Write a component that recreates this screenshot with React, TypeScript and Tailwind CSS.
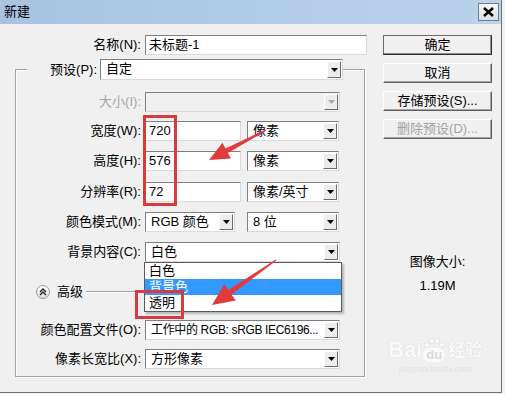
import React from "react";

const FONT = "font-[family-name:'Liberation_Sans','Noto_Sans_CJK_SC',sans-serif]";

function DropArrow({ disabled = false }: { disabled?: boolean }) {
  return (
    <span className="my-[1px] mr-[1px] flex w-[14px] shrink-0 items-center justify-center border border-t-white border-l-white border-r-[#6d6d6d] border-b-[#6d6d6d] bg-[#ececec]">
      <svg width="7" height="4" viewBox="0 0 7 4">
        <path d="M0 0h7L3.5 4z" fill={disabled ? "#a8a8a8" : "#000"} />
      </svg>
    </span>
  );
}

function Select({
  w,
  h = "h-[20px]",
  children,
  disabled = false,
  tight = false,
}: {
  w: string;
  h?: string;
  children?: React.ReactNode;
  disabled?: boolean;
  tight?: boolean;
}) {
  return (
    <div
      className={`${w} ${h} flex shrink-0 border border-t-[#7f7f7f] border-l-[#7f7f7f] border-r-[#dadada] border-b-[#dadada] ${
        disabled ? "bg-[#f0f0f0]" : "bg-white"
      }`}
    >
      <span
        className={`flex-1 overflow-hidden whitespace-nowrap pl-[5px] leading-[18px] ${
          tight ? "text-[12px] tracking-[-0.35px]" : ""
        }`}
      >
        {children}
      </span>
      <DropArrow disabled={disabled} />
    </div>
  );
}

function Input({ w, children }: { w: string; children?: React.ReactNode }) {
  return (
    <div
      className={`${w} h-[20px] shrink-0 border border-t-[#7f7f7f] border-l-[#7f7f7f] border-r-[#dadada] border-b-[#dadada] bg-white pl-[3px] leading-[18px]`}
    >
      {children}
    </div>
  );
}

function Button({
  children,
  primary = false,
  disabled = false,
}: {
  children: React.ReactNode;
  primary?: boolean;
  disabled?: boolean;
}) {
  return (
    <div
      className={`flex h-[20px] w-[109px] items-center justify-center border ${
        primary
          ? "border-[#6a6a6a] border-r-[#303030] border-b-[#303030] shadow-[inset_-1px_-1px_0_#8a8a8a]"
          : "border-t-white border-l-white border-r-[#5e5e5e] border-b-[#5e5e5e] shadow-[inset_-1px_-1px_0_#a5a5a5]"
      } ${disabled ? "text-[#a3a3a3]" : "text-black"}`}
    >
      {children}
    </div>
  );
}

function Row({
  label,
  mt,
  children,
  dim = false,
}: {
  label: string;
  mt: string;
  children: React.ReactNode;
  dim?: boolean;
}) {
  return (
    <div className={`${mt} flex h-[20px] items-center`}>
      <span className={`w-[125px] text-right ${dim ? "text-[#a6a6a6]" : ""}`}>{label}</span>
      <div className="ml-[4px] flex items-center">{children}</div>
    </div>
  );
}

function arrowPoints(tx: number, ty: number, px: number, py: number, head: number, hw: number, sw: number) {
  const dx = px - tx;
  const dy = py - ty;
  const L = Math.hypot(dx, dy);
  const ux = dx / L;
  const uy = dy / L;
  const nx = -uy;
  const ny = ux;
  const bx = px - ux * head;
  const by = py - uy * head;
  const pts = [
    [tx + nx * 0.6, ty + ny * 0.6],
    [bx + nx * sw, by + ny * sw],
    [bx + nx * hw, by + ny * hw],
    [px, py],
    [bx - nx * hw, by - ny * hw],
    [bx - nx * sw, by - ny * sw],
    [tx - nx * 0.6, ty - ny * 0.6],
  ];
  return pts.map((p) => p.map((v) => v.toFixed(1)).join(",")).join(" ");
}

export default function App() {
  return (
    <div className={`relative h-[394px] w-[505px] overflow-hidden bg-[#f0f0f0] text-[13px] text-black ${FONT}`}>
      <div className="flex h-[393px] w-[502px] flex-col border-r border-b border-[#6f6f6f]">
        {/* Title bar */}
        <div className="flex h-[24px] shrink-0 items-center justify-between bg-gradient-to-r from-[#a8c3e2] to-[#bbd2ec] pl-[4px] pr-[2px]">
          <span className="leading-[16px]">新建</span>
          <div className="flex h-[18px] w-[21px] items-center justify-center border border-[#6e7f93] bg-gradient-to-b from-[#f4f6f9] to-[#d8dee6]">
            <svg width="11" height="10" viewBox="0 0 11 10">
              <path d="M1 1l9 8M10 1L1 9" stroke="#000" strokeWidth="2.4" />
            </svg>
          </div>
        </div>

        <div className="flex flex-1">
          {/* Left side */}
          <div className="w-[383px]">
            <div className="mt-[11px] flex h-[20px] items-center">
              <span className="w-[141px] text-right">名称(N):</span>
              <div className="ml-[4px]">
                <Input w="w-[222px]">未标题-1</Input>
              </div>
            </div>

            <fieldset className="mt-[4px] ml-[15px] w-[350px] border border-[#a3a3a3] pb-[7px] shadow-[inset_1px_1px_0_#ffffff,1px_1px_0_#ffffff]">
              <legend className="ml-[11px] bg-[#f0f0f0]">
                <div className="flex h-[21px] items-center">
                  <span className="w-[70px] text-right">预设(P):</span>
                  <div className="ml-[3px]">
                    <Select w="w-[243px]" h="h-[21px]">自定</Select>
                  </div>
                </div>
              </legend>

              <Row label="大小(I):" mt="mt-[12px]" dim>
                <Select w="w-[195px]" disabled />
              </Row>
              <Row label="宽度(W):" mt="mt-[9px]">
                <Input w="w-[96px]">720</Input>
                <div className="ml-[6px]">
                  <Select w="w-[92px]">像素</Select>
                </div>
              </Row>
              <Row label="高度(H):" mt="mt-[10px]">
                <Input w="w-[96px]">576</Input>
                <div className="ml-[6px]">
                  <Select w="w-[92px]">像素</Select>
                </div>
              </Row>
              <Row label="分辨率(R):" mt="mt-[11px]">
                <Input w="w-[96px]">72</Input>
                <div className="ml-[6px]">
                  <Select w="w-[92px]">像素/英寸</Select>
                </div>
              </Row>
              <Row label="颜色模式(M):" mt="mt-[10px]">
                <Select w="w-[90px]">RGB 颜色</Select>
                <div className="ml-[12px]">
                  <Select w="w-[92px]">8 位</Select>
                </div>
              </Row>
              <Row label="背景内容(C):" mt="mt-[10px]">
                <div className="relative">
                  <Select w="w-[195px]">白色</Select>
                  {/* open list */}
                  <div className="absolute left-[-1px] top-[20px] z-10 w-[198px] border border-[#5a5a5a] bg-white shadow-[2px_2px_2px_rgba(0,0,0,0.25)]">
                    <div className="h-[16px] pl-[4px] leading-[16px]">白色</div>
                    <div className="h-[16px] bg-[#3399ff] pl-[4px] leading-[16px] text-white">背景色</div>
                    <div className="h-[16px] pl-[4px] leading-[16px]">透明</div>
                  </div>
                </div>
              </Row>

              {/* Advanced */}
              <div className="mt-[22px] flex h-[16px] items-center">
                <div className="ml-[20px] flex h-[14px] w-[14px] items-center justify-center rounded-full border border-[#9a9a9a] bg-gradient-to-b from-white to-[#dedede]">
                  <svg width="8" height="8" viewBox="0 0 8 8">
                    <path d="M1 4l3-3 3 3M1 7l3-3 3 3" fill="none" stroke="#222" strokeWidth="1.3" />
                  </svg>
                </div>
                <span className="ml-[7px] leading-[16px]">高级</span>
                <div className="ml-[3px] h-[2px] w-[60px] border-t border-t-[#a3a3a3] border-b border-b-white" />
              </div>

              <Row label="颜色配置文件(O):" mt="mt-[20px]">
                <Select w="w-[195px]" tight>工作中的 RGB: sRGB IEC6196...</Select>
              </Row>
              <Row label="像素长宽比(X):" mt="mt-[9px]">
                <Select w="w-[195px]">方形像素</Select>
              </Row>
            </fieldset>
          </div>

          {/* Right side */}
          <div className="flex w-[109px] flex-col items-center pt-[11px]">
            <Button primary>确定</Button>
            <div className="mt-[8px]">
              <Button>取消</Button>
            </div>
            <div className="mt-[8px]">
              <Button>存储预设(S)...</Button>
            </div>
            <div className="mt-[8px]">
              <Button disabled>删除预设(D)...</Button>
            </div>
            <span className="mt-[115px] leading-[16px]">图像大小:</span>
            <span className="mt-[8px] leading-[16px]">1.19M</span>
          </div>
        </div>
      </div>

      {/* Annotations */}
      <div className="pointer-events-none absolute left-[143px] top-[115px] z-20 h-[91px] w-[34px] border-[3px] border-[#d93a3e]" />
      <div className="pointer-events-none absolute left-[135px] top-[290px] z-20 h-[29px] w-[49px] border-[3px] border-[#d93a3e]" />
      <svg className="pointer-events-none absolute left-0 top-0 z-20" width="505" height="394">
        <polygon points={arrowPoints(266, 130, 209, 160, 20, 9, 2.6)} fill="#e03b3d" />
        <polygon points={arrowPoints(276, 260, 212, 305, 22, 10, 2.8)} fill="#e03b3d" />
      </svg>

      {/* Watermark */}
      <div className="pointer-events-none absolute left-[388px] top-[338px] z-20 flex flex-col items-center opacity-70">
        <div className="flex items-end">
          <span className="text-[22px] font-bold leading-[24px] text-white [text-shadow:0_0_1px_#b8b8b8]">Bai</span>
          <div className="relative mx-[1px] flex flex-col items-center">
            <svg width="22" height="10" viewBox="0 0 22 10">
              <ellipse cx="4" cy="7" rx="2.5" ry="2.5" fill="white" stroke="#c8c8c8" strokeWidth="0.5" />
              <ellipse cx="9" cy="3" rx="2.5" ry="2.8" fill="white" stroke="#c8c8c8" strokeWidth="0.5" />
              <ellipse cx="14" cy="3" rx="2.5" ry="2.8" fill="white" stroke="#c8c8c8" strokeWidth="0.5" />
              <ellipse cx="19" cy="7" rx="2.5" ry="2.5" fill="white" stroke="#c8c8c8" strokeWidth="0.5" />
            </svg>
            <span className="rounded-full bg-white px-[3px] text-[13px] font-bold leading-[14px] text-[#d0d0d0]">du</span>
          </div>
          <span className="ml-[2px] text-[17px] font-bold leading-[22px] text-white [text-shadow:0_0_1px_#b8b8b8]">经验</span>
        </div>
        <span className="mt-[2px] text-[9px] leading-[10px] text-[#dcdcdc]">jingyan.baidu.com</span>
      </div>
    </div>
  );
}
